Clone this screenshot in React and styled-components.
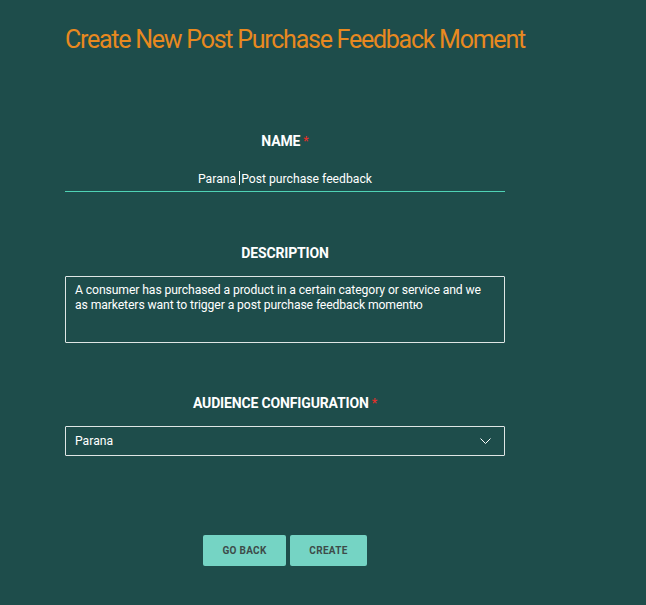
import React from "react";
import styled, { createGlobalStyle } from "styled-components";

const GlobalStyle = createGlobalStyle`
  html, body {
    margin: 0;
    padding: 0;
    background: #1e4d4b;
  }
  body {
    font-family: Roboto, "Liberation Sans", sans-serif;
  }
`;

const Page = styled.div`
  width: 646px;
  height: 605px;
  background: #1e4d4b;
  box-sizing: border-box;
  padding: 24px 0 0 65px;
`;

const Title = styled.h1`
  margin: 0;
  font-family: Roboto, sans-serif;
  font-weight: 400;
  font-size: 25px;
  line-height: 32px;
  color: #e8891f;
  letter-spacing: -1.25px;
`;

const Form = styled.form`
  width: 440px;
  display: flex;
  flex-direction: column;
  margin-top: 76px;
`;

const Field = styled.div`
  display: flex;
  flex-direction: column;
  align-items: center;
  margin-bottom: ${(p) => p.$gap || 0}px;
`;

const Label = styled.label`
  font-family: Roboto, sans-serif;
  font-weight: 700;
  font-size: 14px;
  line-height: 18px;
  color: #ffffff;
  letter-spacing: -0.15px;
  margin-bottom: ${(p) => p.$space || 10}px;
`;

const Required = styled.span`
  color: #e0302a;
  margin-left: 3px;
  font-size: 12px;
  vertical-align: top;
`;

const LineInput = styled.div`
  width: 100%;
  box-sizing: border-box;
  border-bottom: 1px solid #4fd3b5;
  text-align: center;
  color: #ffffff;
  font-size: 12.2px;
  line-height: 16px;
  padding-bottom: 4px;
`;

const Caret = styled.span`
  display: inline-block;
  width: 1px;
  height: 14px;
  background: #ffffff;
  vertical-align: -2px;
  margin: 0 1px 0 3px;
`;

const TextArea = styled.div`
  width: 100%;
  height: 67px;
  box-sizing: border-box;
  border: 1px solid #dfe6e5;
  border-radius: 1px;
  padding: 6px 9px;
  color: #ffffff;
  font-size: 12.2px;
  line-height: 15px;
  letter-spacing: -0.1px;
`;

const Select = styled.div`
  width: 100%;
  height: 30px;
  box-sizing: border-box;
  border: 1px solid #dfe6e5;
  border-radius: 1px;
  padding: 0 13px 0 9px;
  display: flex;
  align-items: center;
  justify-content: space-between;
  color: #ffffff;
  font-size: 12.2px;
`;

const Buttons = styled.div`
  display: flex;
  justify-content: center;
  gap: 4px;
`;

const Button = styled.button`
  width: ${(p) => p.$width}px;
  height: 31px;
  border: none;
  border-radius: 2px;
  background: #75d4c4;
  color: #3d4b49;
  font-family: Roboto, sans-serif;
  font-weight: 700;
  font-size: 10px;
  letter-spacing: 0.3px;
  cursor: pointer;
`;

export default function App() {
  return (
    <Page>
      <GlobalStyle />
      <Title>Create New Post Purchase Feedback Moment</Title>
      <Form>
        <Field $gap={52}>
          <Label $space={21}>
            NAME<Required>*</Required>
          </Label>
          <LineInput>
            Parana<Caret />Post purchase feedback
          </LineInput>
        </Field>
        <Field $gap={51}>
          <Label $space={14}>DESCRIPTION</Label>
          <TextArea>
            A consumer has purchased a product in a certain category or service and we as marketers want to trigger a post purchase feedback momentю
          </TextArea>
        </Field>
        <Field $gap={79}>
          <Label $space={14}>
            AUDIENCE CONFIGURATION<Required>*</Required>
          </Label>
          <Select>
            <span>Parana</span>
            <svg width="11" height="6" viewBox="0 0 11 6" fill="none">
              <path d="M0.5 0.5l5 5 5-5" stroke="#ffffff" strokeWidth="1" />
            </svg>
          </Select>
        </Field>
        <Buttons>
          <Button type="button" $width={83}>GO BACK</Button>
          <Button type="button" $width={77}>CREATE</Button>
        </Buttons>
      </Form>
    </Page>
  );
}
